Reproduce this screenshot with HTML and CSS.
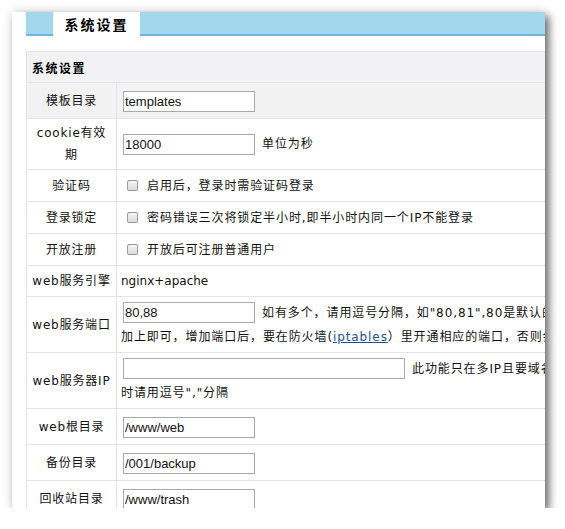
FILE: index.html
```html
<!DOCTYPE html>
<html>
<head>
<meta charset="utf-8">
<link rel="stylesheet" href="styles.css">
</head>
<body>
<div class="window">
  <div class="topbar">
    <div class="tab">系统设置</div>
  </div>
  <table class="grid">
    <colgroup><col class="c1"><col class="c2"></colgroup>
    <tr class="head"><td colspan="2">系统设置</td></tr>
    <tr class="r36 hl"><td class="lbl">模板目录</td><td class="val"><input class="txt" value="templates"></td></tr>
    <tr class="r51"><td class="lbl">cookie有效<br>期</td><td class="val"><input class="txt" value="18000"><span class="note">单位为秒</span></td></tr>
    <tr class="r32"><td class="lbl">验证码</td><td class="val"><span class="chk"></span>启用后，登录时需验证码登录</td></tr>
    <tr class="r32"><td class="lbl">登录锁定</td><td class="val"><span class="chk"></span>密码错误三次将锁定半小时,即半小时内同一个IP不能登录</td></tr>
    <tr class="r32"><td class="lbl">开放注册</td><td class="val"><span class="chk"></span>开放后可注册普通用户</td></tr>
    <tr class="r31"><td class="lbl">web服务引擎</td><td class="val plain">nginx+apache</td></tr>
    <tr class="r56"><td class="lbl">web服务端口</td><td class="val"><input class="txt" value="80,88"><span class="note">如有多个，请用逗号分隔，如"80,81",80是默认的端口，其它端口请</span><br><span class="line2">加上即可，增加端口后，要在防火墙(<a href="#">iptables</a>）里开通相应的端口，否则会无法访问</span></td></tr>
    <tr class="r56"><td class="lbl">web服务器IP</td><td class="val"><input class="txt wide" value=""><span class="note">此功能只在多IP且要域名绑定IP时有用，多个IP</span><br><span class="line2">时请用逗号","分隔</span></td></tr>
    <tr class="r36"><td class="lbl">web根目录</td><td class="val"><input class="txt" value="/www/web"></td></tr>
    <tr class="r36"><td class="lbl">备份目录</td><td class="val"><input class="txt" value="/001/backup"></td></tr>
    <tr class="r36"><td class="lbl">回收站目录</td><td class="val"><input class="txt" value="/www/trash"></td></tr>
  </table>
</div>
</body>
</html>
```
FILE: styles.css
```css
html, body {
  margin: 0;
  padding: 0;
  background: #ffffff;
}
body {
  font-family: "DejaVu Sans", "Noto Sans CJK SC", sans-serif;
  font-size: 12px;
  color: #111;
}
.window {
  margin: 12px 0 0 12px;
  width: 533px;
  height: 496px;
  overflow: hidden;
  background: #fff;
  box-shadow: 4px 4px 8px rgba(0,0,0,0.55), 0 0 12px rgba(0,0,0,0.12);
}
.topbar {
  margin-left: 14px;
  height: 22px;
  background: #a3d7ee;
  border-bottom: 2px solid #68b9e2;
  display: flex;
}
.tab {
  margin-left: 27px;
  width: 87px;
  height: 24px;
  background: #fff;
  font-family: "Noto Sans CJK SC", sans-serif;
  font-weight: bold;
  font-size: 14px;
  letter-spacing: 2px;
  line-height: 24px;
  text-align: center;
  color: #000;
}
.grid {
  margin: 15px 0 0 14px;
  border-collapse: collapse;
  width: 720px;
  table-layout: fixed;
}
.c1 { width: 90px; }
.c2 { width: 630px; }
.grid td {
  border: 1px solid #e3e3ea;
  padding: 0;
  vertical-align: middle;
}
.head td {
  background: #f2f2f5;
  height: 30px;
  padding-left: 5px;
  font-family: "Noto Sans CJK SC", sans-serif;
  font-weight: bold;
  font-size: 12px;
  letter-spacing: 1.5px;
  color: #000;
}
.hl td { background: #f2f2f2; }
.lbl {
  text-align: center;
  letter-spacing: 0.8px;
  line-height: 22px;
}
.val {
  padding-left: 4px !important;
  white-space: nowrap;
  letter-spacing: 0.9px;
  line-height: 24px;
}
.plain { letter-spacing: 0; }
.r31 td { height: 30px; }
.r32 td { height: 31px; }
.r36 td { height: 35px; }
.r51 td { height: 50px; }
.r56 td { height: 55px; }
.txt {
  box-sizing: border-box;
  width: 132px;
  height: 21px;
  margin: 0 0 0 2px;
  padding: 0 1px;
  border: 1px solid #a9a9a9;
  font-family: "Liberation Sans", Arial, sans-serif;
  font-size: 13px;
  color: #111;
  vertical-align: middle;
  background: #fff;
  letter-spacing: 0;
}
.txt.wide { width: 282px; }
.note { margin-left: 7px; vertical-align: middle; }
.line2 { display: inline-block; }
.line2 a { color: #1a4f9c; text-decoration: underline; }
.chk {
  display: inline-block;
  box-sizing: border-box;
  width: 11px;
  height: 11px;
  margin: 0 9px 0 6px;
  border: 1px solid #9a9a9a;
  border-radius: 2px;
  background: linear-gradient(#f4f4f4, #dcdcdc);
  vertical-align: -1px;
}
```
